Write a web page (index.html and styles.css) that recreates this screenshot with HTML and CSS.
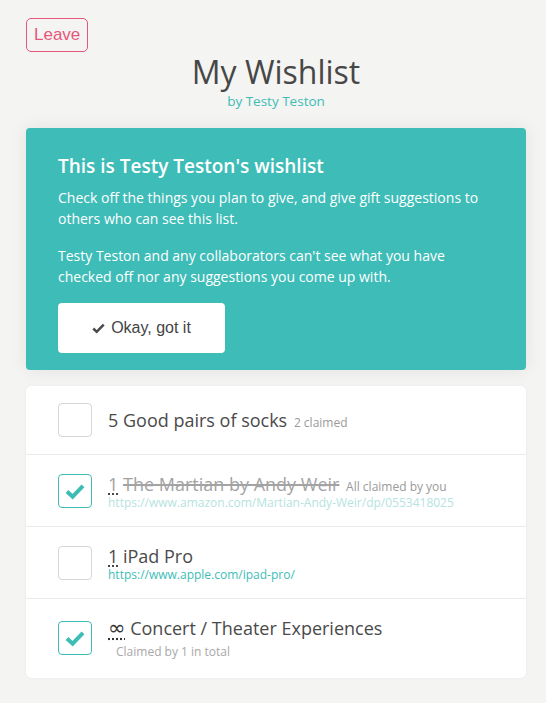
FILE: index.html
```html
<!DOCTYPE html>
<html>
<head>
<meta charset="utf-8">
<link rel="stylesheet" href="styles.css">
</head>
<body>
<div class="page">
  <div class="topbar"><button class="leave">Leave</button></div>
  <header class="title">
    <h1>My Wishlist</h1>
    <div class="by">by Testy Teston</div>
  </header>
  <section class="notice">
    <h2>This is Testy Teston's wishlist</h2>
    <p>Check off the things you plan to give, and give gift suggestions to others who can see this list.</p>
    <p>Testy Teston and any collaborators can't see what you have checked off nor any suggestions you come up with.</p>
    <button class="okay"><svg class="tick" viewBox="0 0 14 12" width="13" height="11"><path d="M1.3 6 L5 9.6 L12.7 1.8" fill="none" stroke="#4a4a4a" stroke-width="2.8"/></svg>Okay, got it</button>
  </section>
  <section class="list">
    <div class="row">
      <span class="box"></span>
      <div class="info">
        <div class="name">5 Good pairs of socks <span class="meta">2 claimed</span></div>
      </div>
    </div>
    <div class="row">
      <span class="box checked"><svg viewBox="0 0 34 34" width="32" height="32"><path d="M8.5 17.5 L14.5 23 L25.5 11.5" fill="none" stroke="#3dbdb6" stroke-width="4.2"/></svg></span>
      <div class="info">
        <div class="name done"><span class="qty">1</span> <s>The Martian by Andy Weir</s> <span class="meta">All claimed by you</span></div>
        <a class="url faded">https://www.amazon.com/Martian-Andy-Weir/dp/0553418025</a>
      </div>
    </div>
    <div class="row">
      <span class="box"></span>
      <div class="info">
        <div class="name"><span class="qty">1</span> iPad Pro</div>
        <a class="url">https://www.apple.com/ipad-pro/</a>
      </div>
    </div>
    <div class="row last">
      <span class="box checked"><svg viewBox="0 0 34 34" width="32" height="32"><path d="M8.5 17.5 L14.5 23 L25.5 11.5" fill="none" stroke="#3dbdb6" stroke-width="4.2"/></svg></span>
      <div class="info">
        <div class="name"><span class="qty inf">∞</span> Concert / Theater Experiences</div>
        <div class="total">Claimed by 1 in total</div>
      </div>
    </div>
  </section>
</div>
</body>
</html>
```

FILE: styles.css
```css
* { box-sizing: border-box; }
html, body { margin: 0; padding: 0; }
body {
  background: #f4f4f2;
  font-family: "Open Sans", "DejaVu Sans", sans-serif;
  color: #444;
}
.page {
  padding: 18px 20px 24px 26px;
}
.topbar { display: flex; }
.leave {
  font-family: "Liberation Sans", Arial, sans-serif;
  font-size: 17px;
  color: #e5587c;
  background: transparent;
  border: 1px solid #e5587c;
  border-radius: 5px;
  height: 34px;
  padding: 0 7px;
  cursor: pointer;
}
.title {
  text-align: center;
  margin-bottom: 18px;
}
.title h1 {
  margin: 0;
  font-weight: 400;
  font-size: 32px;
  line-height: 40px;
  color: #474747;
}
.by {
  font-size: 13.5px;
  color: #3dbdb6;
  line-height: 18px;
  margin-top: 0;
}
.notice {
  background: #3ebcb8;
  border-radius: 4px;
  padding: 25px 32px 17px 32px;
  color: #fff;
  box-shadow: 0 0 18px rgba(0,0,0,0.08);
}
.notice h2 {
  margin: 0 0 8px 0;
  font-size: 19px;
  font-weight: 600;
  line-height: 26px;
}
.notice p {
  margin: 0 0 16px 0;
  font-size: 14px;
  line-height: 21px;
}
.okay {
  display: flex;
  align-items: center;
  justify-content: center;
  gap: 6px;
  width: 167px;
  height: 50px;
  background: #fff;
  border: none;
  border-radius: 4px;
  font-family: "Liberation Sans", Arial, sans-serif;
  font-size: 16px;
  color: #444;
  margin-top: 3px;
}
.tick { display: block; }
.list {
  margin-top: 16px;
  background: #fff;
  border-radius: 5px;
  box-shadow: 0 0 3px rgba(0,0,0,0.06);
}
.row {
  display: flex;
  align-items: center;
  gap: 16px;
  padding: 17px 32px 17px 32px;
  border-bottom: 1px solid #ebebeb;
}
.row.last { border-bottom: none; padding-bottom: 18px; }
.box {
  flex: none;
  width: 34px;
  height: 34px;
  border: 1px solid #d6d6d6;
  border-radius: 4px;
  display: flex;
  align-items: center;
  justify-content: center;
}
.box.checked { border-color: #3dbdb6; }
.box svg { display: block; }
.name {
  font-size: 18px;
  line-height: 24px;
  color: #4a4a4a;
}
.name.done { color: #a3a3a3; }
.name s { text-decoration-thickness: 1.5px; }
.qty {
  text-decoration: underline dotted #333;
  text-underline-offset: 3px;
}
.qty.inf {
  font-family: "DejaVu Sans", sans-serif;
  font-size: 21px;
  line-height: 0;
  color: #333;
}
.meta {
  font-size: 12px;
  line-height: 1;
  color: #9a9a9a;
  margin-left: 2px;
}
.url {
  display: block;
  font-size: 12px;
  line-height: 13px;
  color: #3dbdb6;
  text-decoration: none;
}
.url.faded { color: #b5e3e0; }
.total {
  font-size: 12px;
  line-height: 16px;
  color: #a8a8a8;
  margin-top: 4px;
  padding-left: 8px;
}
```
